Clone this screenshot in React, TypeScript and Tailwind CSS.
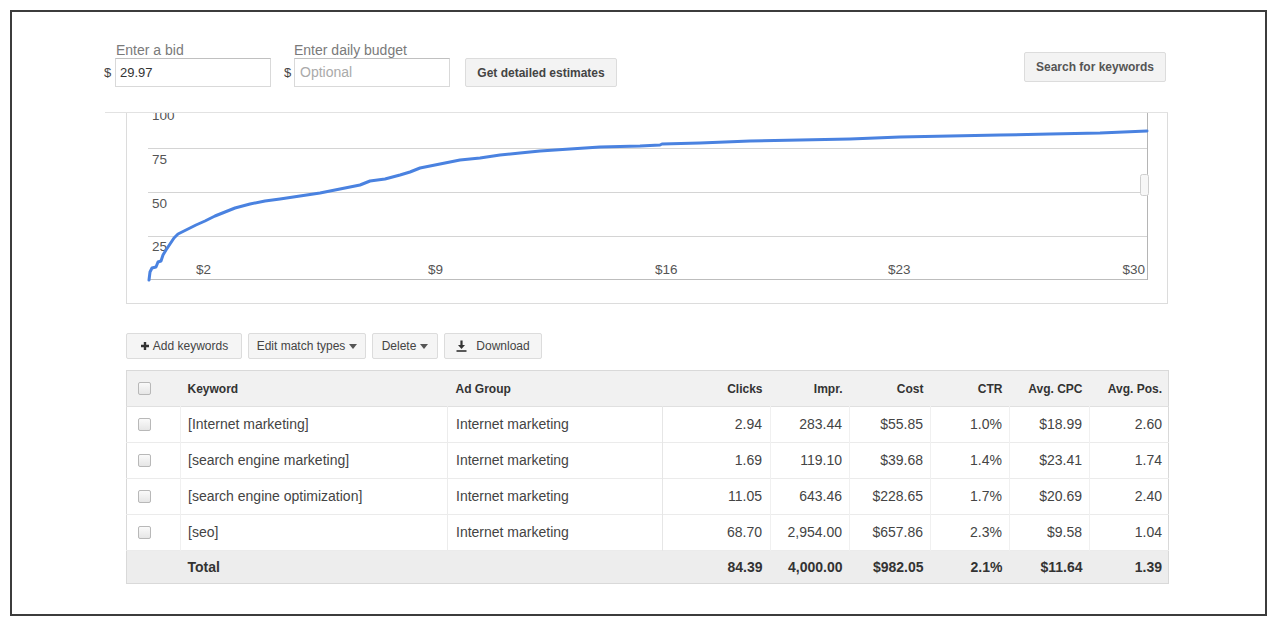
import React from "react";

const curve: [number, number][] = [
  [149, 280], [150, 272], [152, 268], [156, 267], [158, 262], [161, 261], [163, 255], [166, 250],
  [170, 244], [174, 238], [178, 234], [184, 231], [190, 228], [196, 225], [205, 221], [215, 216],
  [225, 212], [235, 208], [250, 204], [265, 201], [280, 199], [300, 196], [320, 193], [340, 189],
  [360, 185], [370, 181], [385, 179], [400, 175], [410, 172], [420, 168], [440, 164], [460, 160],
  [480, 158], [500, 155], [520, 153], [540, 151], [570, 149], [600, 147], [640, 146], [660, 145],
  [662, 144], [700, 143], [750, 141], [800, 140], [850, 139], [900, 137], [950, 136], [1000, 135],
  [1050, 134], [1100, 133], [1147, 131],
];

const pts = curve.map(([x, y]) => `${x - 127},${y - 113}`).join(" ");

function Caret() {
  return (
    <svg width="8" height="5" viewBox="0 0 8 5" className="ml-[4px]">
      <path d="M0 0 L8 0 L4 5 Z" fill="#555" />
    </svg>
  );
}

function Checkbox() {
  return (
    <span className="block w-[13px] h-[13px] rounded-[2px] border border-[#b8b8b8] bg-gradient-to-b from-[#fafafa] to-[#e6e6e6]" />
  );
}

const rows = [
  ["[Internet marketing]", "Internet marketing", "2.94", "283.44", "$55.85", "1.0%", "$18.99", "2.60"],
  ["[search engine marketing]", "Internet marketing", "1.69", "119.10", "$39.68", "1.4%", "$23.41", "1.74"],
  ["[search engine optimization]", "Internet marketing", "11.05", "643.46", "$228.65", "1.7%", "$20.69", "2.40"],
  ["[seo]", "Internet marketing", "68.70", "2,954.00", "$657.86", "2.3%", "$9.58", "1.04"],
];

const btn =
  "flex items-center justify-center h-[26px] border border-[#dcdcdc] bg-[#f5f5f5] rounded-[2px] text-[12px] text-[#444]";

export default function App() {
  return (
    <div className="w-[1280px] h-[626px] bg-white overflow-hidden" style={{ fontFamily: '"Liberation Sans", Arial, sans-serif' }}>
      <div className="ml-[10px] mt-[10px] w-[1257px] h-[606px] border-2 border-[#3c3c3c]">
        <div className="ml-[92px] w-[1064px] flex flex-col">
          {/* Top controls */}
          <div className="mt-[30px] flex items-start">
            <div className="flex flex-col">
              <div className="pl-[12px] h-[16px] leading-[16px] text-[14px] text-[#7a7a7a]">Enter a bid</div>
              <div className="flex items-center">
                <span className="w-[11px] text-[13px] text-[#444]">$</span>
                <div className="w-[156px] h-[29px] border border-[#d9d9d9] border-t-[#c0c0c0] flex items-center pl-[4px] text-[13px] text-[#333]">
                  29.97
                </div>
              </div>
            </div>
            <div className="flex flex-col ml-[13px]">
              <div className="pl-[10px] h-[16px] leading-[16px] text-[14px] text-[#7a7a7a]">Enter daily budget</div>
              <div className="flex items-center">
                <span className="w-[10px] text-[13px] text-[#444]">$</span>
                <div className="w-[156px] h-[29px] border border-[#d9d9d9] border-t-[#c0c0c0] flex items-center pl-[5px] text-[14px] text-[#aaa]">
                  Optional
                </div>
              </div>
            </div>
            <div className="ml-[15px] mt-[16px] w-[152px] h-[29px] flex items-center justify-center border border-[#dcdcdc] bg-[#f3f3f3] rounded-[2px] text-[12px] font-bold text-[#444]">
              Get detailed estimates
            </div>
            <div className="ml-auto mr-[2px] mt-[10px] w-[142px] h-[30px] flex items-center justify-center border border-[#dcdcdc] bg-[#f3f3f3] rounded-[2px] text-[12px] font-bold text-[#555]">
              Search for keywords
            </div>
          </div>

          {/* Chart */}
          <div className="mt-[25px] ml-px w-[1063px] border-t border-[#e2e2e2]">
            <div className="ml-[21px] w-[1042px] h-[191px] border-l border-r border-b border-[#dcdcdc] overflow-hidden">
              <svg width="1040" height="190" viewBox="0 0 1040 190">
                <g stroke="#d4d4d4" strokeWidth="1">
                  <line x1="21" y1="35.5" x2="1020" y2="35.5" />
                  <line x1="21" y1="79.5" x2="1020" y2="79.5" />
                  <line x1="21" y1="123.5" x2="1020" y2="123.5" />
                </g>
                <line x1="21" y1="166.5" x2="1020" y2="166.5" stroke="#bdbdbd" strokeWidth="1" />
                <line x1="1020.5" y1="0" x2="1020.5" y2="167" stroke="#b5b5b5" strokeWidth="1" />
                <g fill="#555" fontSize="13.5" fontFamily='"Liberation Sans", Arial, sans-serif'>
                  <text x="25" y="7">100</text>
                  <text x="25" y="51">75</text>
                  <text x="25" y="95">50</text>
                  <text x="25" y="138">25</text>
                  <text x="69" y="161">$2</text>
                  <text x="301" y="161">$9</text>
                  <text x="528" y="161">$16</text>
                  <text x="761" y="161">$23</text>
                  <text x="1018" y="161" textAnchor="end">$30</text>
                </g>
                <polyline points={pts} fill="none" stroke="#4a82e0" strokeWidth="3" strokeLinejoin="round" strokeLinecap="round" />
                <rect x="1013.5" y="61.5" width="8" height="21" rx="2" fill="#f7f7f7" stroke="#cfcfcf" />
              </svg>
            </div>
          </div>

          {/* Toolbar */}
          <div className="ml-[22px] mt-[29px] flex gap-[6px]">
            <div className={`${btn} w-[116px]`}>
              <svg width="10" height="10" viewBox="0 0 10 10" className="mr-[3px]">
                <path d="M5 1 V9 M1 5 H9" stroke="#333" strokeWidth="2.4" />
              </svg>
              Add keywords
            </div>
            <div className={`${btn} w-[118px]`}>
              Edit match types
              <Caret />
            </div>
            <div className={`${btn} w-[66px]`}>
              Delete
              <Caret />
            </div>
            <div className={`${btn} w-[98px]`}>
              <svg width="11" height="12" viewBox="0 0 11 12" className="mr-[9px]">
                <path d="M5.5 0.5 V6" stroke="#333" strokeWidth="2.2" />
                <path d="M2 5 L9 5 L5.5 9 Z" fill="#333" />
                <path d="M0.5 11 H10.5" stroke="#333" strokeWidth="1.6" />
              </svg>
              Download
            </div>
          </div>

          {/* Table */}
          <table className="ml-[22px] mt-[11px] w-[1042px] table-fixed border-collapse border border-[#d9d9d9]">
            <colgroup>
              <col className="w-[54px]" />
              <col className="w-[267px]" />
              <col className="w-[215px]" />
              <col className="w-[108px]" />
              <col className="w-[79px]" />
              <col className="w-[81px]" />
              <col className="w-[79px]" />
              <col className="w-[80px]" />
              <col className="w-[79px]" />
            </colgroup>
            <thead>
              <tr className="h-[36px] bg-[#f1f1f1] text-[12px] font-bold text-[#333] border-b border-[#e0e0e0]">
                <th className="pl-[11px] text-left">
                  <Checkbox />
                </th>
                <th className="pl-[7px] text-left">Keyword</th>
                <th className="pl-[8px] text-left">Ad Group</th>
                <th className="pr-[8px] text-right">Clicks</th>
                <th className="pr-[7px] text-right">Impr.</th>
                <th className="pr-[7px] text-right">Cost</th>
                <th className="pr-[7px] text-right">CTR</th>
                <th className="pr-[7px] text-right">Avg. CPC</th>
                <th className="pr-[6px] text-right">Avg. Pos.</th>
              </tr>
            </thead>
            <tbody>
              {rows.map((r, i) => (
                <tr key={i} className="h-[36px] bg-white text-[14px] text-[#444] border-b border-[#ebebeb]">
                  <td className="pl-[11px] border-r border-[#f0f0f0]">
                    <Checkbox />
                  </td>
                  <td className="pl-[7px] border-r border-[#ececec]">{r[0]}</td>
                  <td className="pl-[8px] border-r border-[#e6e6e6]">{r[1]}</td>
                  <td className="pr-[8px] text-right border-r border-[#f0f0f0]">{r[2]}</td>
                  <td className="pr-[7px] text-right border-r border-[#f0f0f0]">{r[3]}</td>
                  <td className="pr-[7px] text-right border-r border-[#f0f0f0]">{r[4]}</td>
                  <td className="pr-[7px] text-right border-r border-[#f0f0f0]">{r[5]}</td>
                  <td className="pr-[7px] text-right border-r border-[#f0f0f0]">{r[6]}</td>
                  <td className="pr-[6px] text-right">{r[7]}</td>
                </tr>
              ))}
              <tr className="h-[33px] bg-[#ededed] text-[14px] font-bold text-[#333]">
                <td />
                <td className="pl-[7px]">Total</td>
                <td />
                <td className="pr-[8px] text-right">84.39</td>
                <td className="pr-[7px] text-right">4,000.00</td>
                <td className="pr-[7px] text-right">$982.05</td>
                <td className="pr-[7px] text-right">2.1%</td>
                <td className="pr-[7px] text-right">$11.64</td>
                <td className="pr-[6px] text-right">1.39</td>
              </tr>
            </tbody>
          </table>
        </div>
      </div>
    </div>
  );
}
